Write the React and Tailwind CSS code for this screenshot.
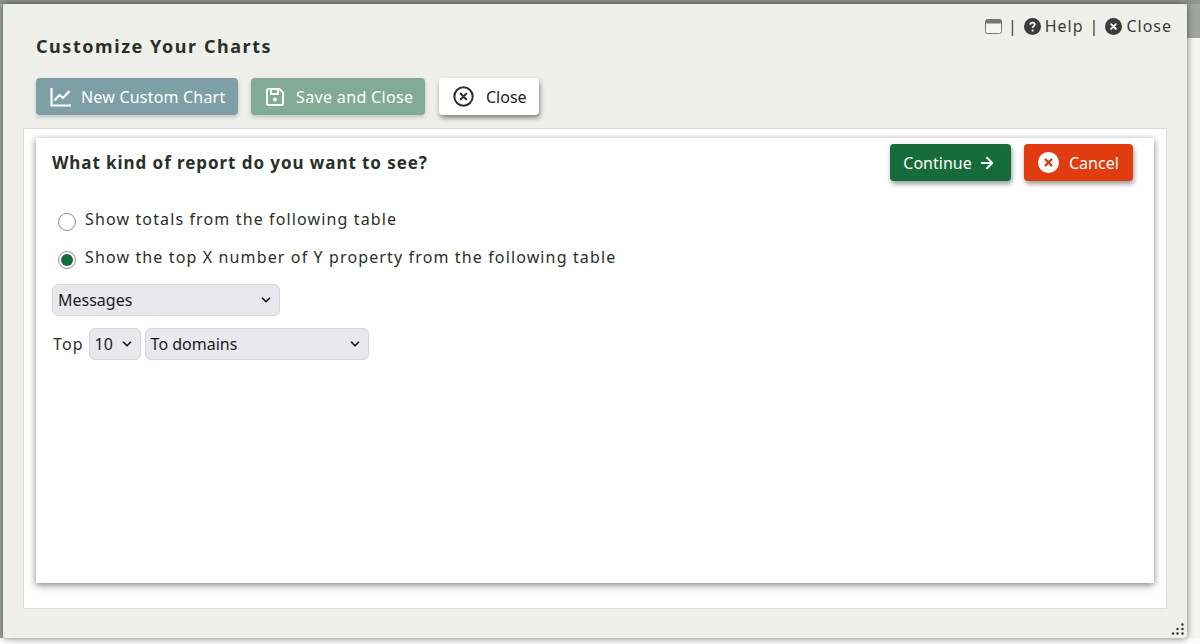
import React from 'react'
import { ArrowRight, ChevronDown } from 'lucide-react'

function Select({ label, className }) {
  return (
    <div className={`flex items-center justify-between h-8 pl-[5px] pr-[6px] rounded-[6px] border border-[#d6d6da] bg-[#e9e9ed] text-[16px] text-[#1a1a1a] ${className}`}>
      <span>{label}</span>
      <ChevronDown size={14} strokeWidth={3} />
    </div>
  )
}

function SolidCircleX({ bg, fg, size = 18 }) {
  return (
    <svg width={size} height={size} viewBox="0 0 18 18">
      <circle cx="9" cy="9" r="9" fill={bg} />
      <path d="M6.5 6.5l5 5M11.5 6.5l-5 5" stroke={fg} strokeWidth="2" strokeLinecap="round" />
    </svg>
  )
}

function CircleHelpSolid() {
  return (
    <svg width="17" height="17" viewBox="0 0 17 17">
      <circle cx="8.5" cy="8.5" r="8.5" fill="#3b3b3b" />
      <path d="M6.2 6.6c.1-1.3 1.1-2 2.4-2 1.3 0 2.2.8 2.2 1.9 0 1.7-2.2 1.7-2.2 3.4" fill="none" stroke="#fff" strokeWidth="1.7" />
      <circle cx="8.6" cy="12.6" r="1.1" fill="#fff" />
    </svg>
  )
}

function ChartIcon() {
  return (
    <svg width="22" height="20" viewBox="0 0 22 20" fill="none" stroke="#fff" strokeWidth="2.2">
      <path d="M1.5 1v17.5H21" />
      <path d="M4.5 13.5l5-5.5 3.5 3 6.5-7" strokeLinejoin="round" />
    </svg>
  )
}

function SaveIcon() {
  return (
    <svg width="20" height="20" viewBox="0 0 20 20" fill="none" stroke="#fff" strokeWidth="2">
      <path d="M3.5 2h11l3.5 3.5V16.5a1.5 1.5 0 0 1-1.5 1.5h-13A1.5 1.5 0 0 1 2 16.5v-13A1.5 1.5 0 0 1 3.5 2z" strokeLinejoin="round" />
      <path d="M6 2.5V7h7V2.5" />
      <circle cx="10" cy="12.5" r="2" fill="#fff" stroke="none" />
    </svg>
  )
}

function OutlineCircleX() {
  return (
    <svg width="21" height="21" viewBox="0 0 21 21" fill="none" stroke="#2b2f2c" strokeWidth="2">
      <circle cx="10.5" cy="10.5" r="9.2" />
      <path d="M7.8 7.8l5.4 5.4M13.2 7.8l-5.4 5.4" strokeLinecap="round" />
    </svg>
  )
}

export default function App() {
  return (
    <div className="h-[644px] w-[1200px] overflow-hidden bg-[#fbfbfb] font-['Noto_Sans',sans-serif]">
      <div className="h-[4px] bg-[#8f9691]" />
      <div className="flex h-[634px]">
        <div className="w-[3px] bg-[#a3aaa6]" />
        <div className="relative w-[1184px] rounded-[4px] bg-[#eff0eb] shadow-[0_0_7px_rgba(0,0,0,0.55)]">
          <div className="absolute right-[15px] top-[10px] flex items-center gap-[6px] text-[16px] tracking-[1px] text-[#3b3b3b]">
            <svg width="17" height="15" viewBox="0 0 17 15">
              <rect x="0.5" y="0.5" width="16" height="14" rx="2" fill="#f5f5f2" stroke="#777" />
              <rect x="0.5" y="0.5" width="16" height="4" rx="1.5" fill="#777" />
            </svg>
            <span>|</span>
            <span className="flex items-center gap-[4px]">
              <CircleHelpSolid />
              Help
            </span>
            <span>|</span>
            <span className="flex items-center gap-[4px]">
              <SolidCircleX bg="#3b3b3b" fg="#fff" size={17} />
              Close
            </span>
          </div>

          <h1 className="pl-[33px] pt-[30px] text-[18px] leading-[24px] font-bold tracking-[1.55px] text-[#2b2f2c]">Customize Your Charts</h1>

          <div className="mt-[20px] flex gap-[13px] pl-[33px]">
            <button className="flex h-[37px] w-[202px] items-center gap-[9px] rounded-[4px] bg-[#7f9fa6] pl-[14px] text-[16px] tracking-[0.2px] text-white shadow-[0_2px_4px_rgba(0,0,0,0.2)]">
              <ChartIcon />
              New Custom Chart
            </button>
            <button className="flex h-[37px] w-[174px] items-center gap-[11px] rounded-[4px] bg-[#81ab94] pl-[14px] text-[16px] tracking-[0.35px] text-white shadow-[0_2px_4px_rgba(0,0,0,0.2)]">
              <SaveIcon />
              Save and Close
            </button>
            <button className="ml-[1px] flex h-[37px] w-[100px] items-center gap-[12px] rounded-[4px] bg-white pl-[14px] text-[16px] text-[#222] shadow-[1px_3px_5px_rgba(0,0,0,0.45)]">
              <OutlineCircleX />
              Close
            </button>
          </div>

          <div className="mx-[20px] mt-[13px] h-[481px] border border-[#dcdcd8] bg-white px-[12px] pt-[9px]">
            <div className="h-[445px] bg-white px-[16px] pt-[6px] shadow-[0_2px_7px_rgba(0,0,0,0.5)]">
              <div className="flex items-start justify-between">
                <h2 className="pt-[7px] text-[17px] leading-[24px] font-bold tracking-[0.93px] text-[#2b2f2c]">What kind of report do you want to see?</h2>
                <div className="mr-[5px] flex gap-[13px]">
                  <button className="flex h-[37px] w-[121px] items-center justify-center gap-[6px] rounded-[4px] bg-[#156b39] pr-[2px] text-[16px] text-white shadow-[1px_3px_5px_rgba(0,0,0,0.4)]">
                    Continue
                    <ArrowRight size={18} strokeWidth={2.5} />
                  </button>
                  <button className="flex h-[37px] w-[109px] items-center gap-[10px] rounded-[4px] bg-[#e03c10] pl-[14px] text-[16px] text-white shadow-[1px_3px_5px_rgba(0,0,0,0.4)]">
                    <SolidCircleX bg="#fff" fg="#c8442a" size={21} />
                    Cancel
                  </button>
                </div>
              </div>

              <div className="mt-[27px] flex flex-col gap-[15px] pl-[6px] text-[16px] leading-[22px] tracking-[1.13px] text-[#2b2f2c]">
                <label className="flex items-start gap-[9px]">
                  <span className="mt-[5px] h-[18px] w-[18px] rounded-full border border-[#8f8f8f] bg-white" />
                  Show totals from the following table
                </label>
                <label className="flex items-start gap-[9px]">
                  <span className="mt-[5px] flex h-[18px] w-[18px] items-center justify-center rounded-full border border-[#8f8f8f] bg-white">
                    <span className="h-[12px] w-[12px] rounded-full bg-[#156b39]" />
                  </span>
                  Show the top X number of Y property from the following table
                </label>
              </div>

              <Select label="Messages" className="mt-[15px] w-[228px]" />

              <div className="mt-[12px] flex items-center gap-[4px]">
                <span className="ml-[1px] mr-[1px] text-[16px] tracking-[1.1px] text-[#2b2f2c]">Top</span>
                <Select label="10" className="w-[52px]" />
                <Select label="To domains" className="w-[224px]" />
              </div>
            </div>
          </div>

          <svg className="absolute bottom-[2px] right-[2px]" width="14" height="14" viewBox="0 0 14 14" fill="#333">
            <circle cx="11.5" cy="2.5" r="1.2" />
            <circle cx="6.5" cy="7" r="1.2" />
            <circle cx="11.5" cy="7" r="1.2" />
            <circle cx="2" cy="11.5" r="1.2" />
            <circle cx="6.5" cy="11.5" r="1.2" />
            <circle cx="11.5" cy="11.5" r="1.2" />
          </svg>
        </div>
        <div className="w-[13px] bg-[#f4f5f3]">
          <div className="h-[34px] bg-[#a0a5a2]" />
        </div>
      </div>
    </div>
  )
}
